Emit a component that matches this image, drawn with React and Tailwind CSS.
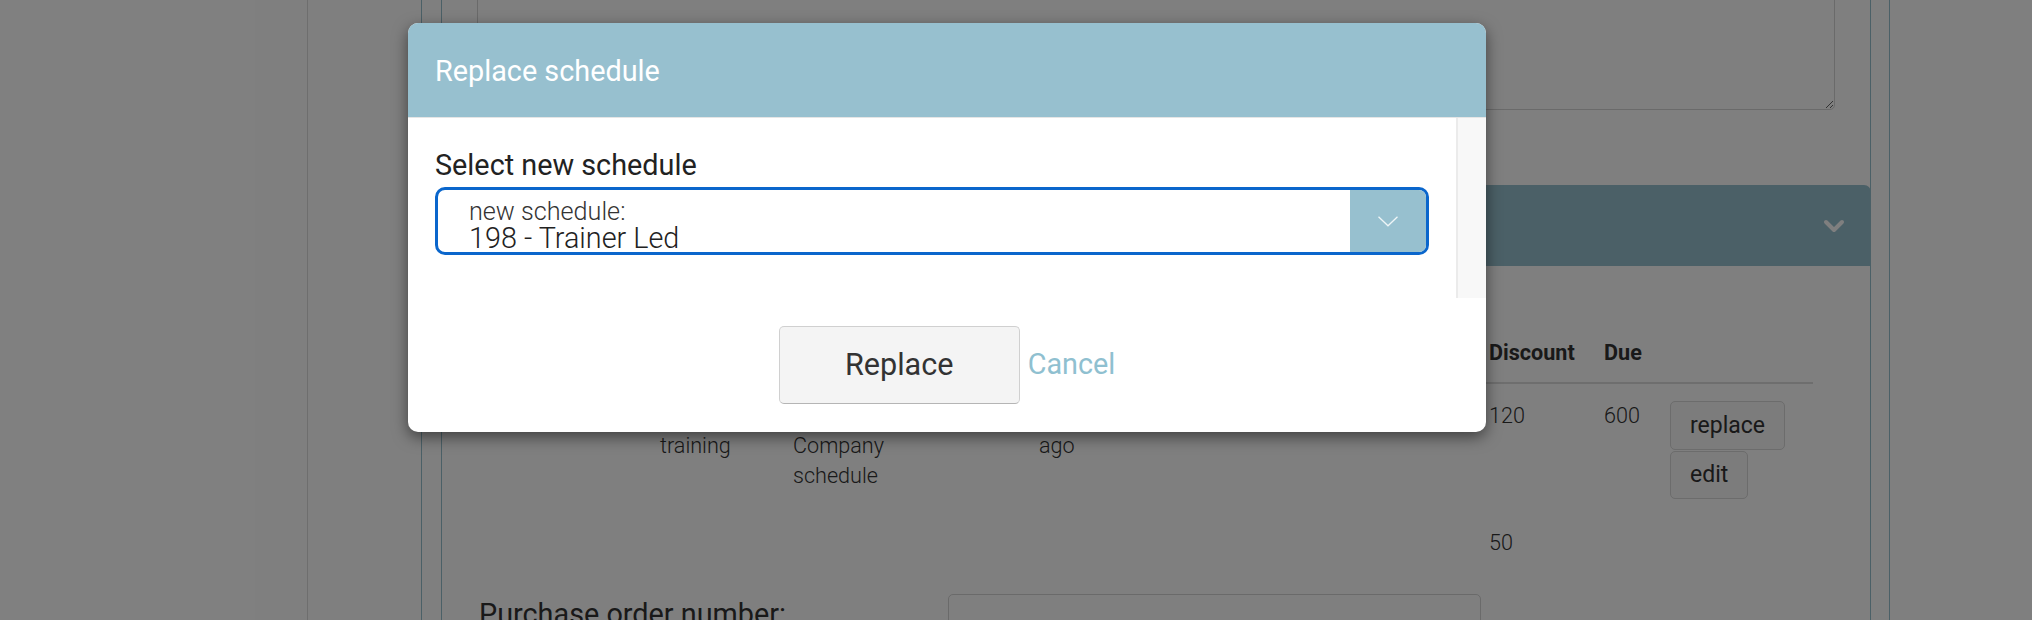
import React from "react";

function Chevron() {
  return (
    <svg width="22" height="14" viewBox="0 0 22 14" fill="none">
      <polyline points="3,3 11,11 19,3" stroke="#ffffff" strokeWidth="4" strokeLinecap="round" strokeLinejoin="round" />
    </svg>
  );
}

function SelectChevron() {
  return (
    <svg width="20" height="11" viewBox="0 0 20 11" fill="none">
      <polyline points="0.5,0.8 10,9.8 19.5,0.8" stroke="#eef5f7" strokeWidth="1.3" />
    </svg>
  );
}

export default function App() {
  const th = "text-left font-bold pt-[8px] pb-[14px] border-b-2 border-[#dddddd]";
  const td = "align-top pt-[17px] pb-[12px]";
  return (
    <div className="relative w-[2032px] h-[620px] overflow-hidden bg-white font-['Roboto',sans-serif]">
      {/* background page */}
      <div className="flex h-[620px]">
        <div className="w-[308px] shrink-0 border-r border-[#dcdcdc]" />
        <div className="pl-[113px]">
          <div className="flex h-[620px] w-[1469px] flex-col border-x border-[#97c0cf] pl-[19px] pr-[18px]">
            <div className="-mt-[40px] h-[700px] shrink-0 border-x border-[#97c0cf]">
              <div className="px-[35px]">
                <textarea
                  readOnly
                  className="block h-[150px] w-full rounded-[5px] border border-[#d4d4d4] bg-white"
                />
              </div>
              <div className="-mx-px mt-[75px] flex h-[81px] items-center justify-end rounded-tr-[7px] bg-[#97c0cf] pr-[26px]">
                <Chevron />
              </div>
              <div className="pl-[37px] pt-[64px]">
                <table className="w-[1334px] table-fixed border-collapse text-[21.6px] leading-[30px] text-[#333]">
                  <thead>
                    <tr>
                      <th className={`w-[181px] ${th}`}></th>
                      <th className={`w-[133px] ${th}`}></th>
                      <th className={`w-[246px] ${th}`}></th>
                      <th className={`w-[450px] ${th}`}></th>
                      <th className={`w-[115px] ${th}`}>Discount</th>
                      <th className={`w-[66px] ${th}`}>Due</th>
                      <th className={th}></th>
                    </tr>
                  </thead>
                  <tbody className="font-light">
                    <tr>
                      <td className={td}></td>
                      <td className={td}>
                        <div className="h-[30px]"></div>
                        training
                      </td>
                      <td className={td}>
                        <div className="h-[30px]"></div>
                        <div className="w-[130px]">Company schedule</div>
                      </td>
                      <td className={td}>
                        <div className="h-[30px]"></div>
                        ago
                      </td>
                      <td className={td}>120</td>
                      <td className={td}>600</td>
                      <td className={td}>
                        <div className="flex flex-col items-start gap-px font-normal">
                          <button className="h-[49px] rounded-[5px] border border-[#d8d8d8] bg-[#f8f8f8] px-[19px] text-[23px] leading-[30px] text-[#333]">
                            replace
                          </button>
                          <button className="h-[48px] rounded-[5px] border border-[#d8d8d8] bg-[#f8f8f8] px-[19px] text-[23px] leading-[30px] text-[#333]">
                            edit
                          </button>
                        </div>
                      </td>
                    </tr>
                    <tr>
                      <td className={td}></td>
                      <td className={td}></td>
                      <td className={td}></td>
                      <td className={td}></td>
                      <td className={td}>50</td>
                      <td className={td}></td>
                      <td className={td}></td>
                    </tr>
                  </tbody>
                </table>
                <div className="mt-[24px] flex items-start">
                  <div className="w-[469px] text-[28.8px] leading-[40px] text-[#333]">Purchase order number:</div>
                  <div className="h-[60px] w-[533px] rounded-[5px] border border-[#d4d4d4] pl-[42px] pt-[22px] text-[21.6px] leading-[30px] text-[#555]">
                    ABB-1042
                  </div>
                </div>
              </div>
            </div>
          </div>
        </div>
      </div>

      {/* backdrop */}
      <div className="absolute inset-0 bg-black/50" />

      {/* modal */}
      <div className="absolute left-[408px] top-[23px] w-[1078px] overflow-hidden rounded-[10px] bg-white shadow-[0_5px_15px_rgba(0,0,0,0.5)]">
        <div className="border-b border-[#e5e5e5] bg-[#97c0cf] pb-[26px] pl-[27px] pt-[28px] text-[28.8px] leading-[40px] text-white">
          Replace schedule
        </div>
        <div className="flex h-[180px]">
          <div className="flex-1 px-[27px] pt-[27px]">
            <div className="text-[28.8px] leading-[40px] text-[#222]">Select new schedule</div>
            <div className="mt-[2px] flex h-[68px] overflow-hidden rounded-[10px] border-[3px] border-[#0a66cc]">
              <div className="flex-1 pl-[31px] pt-[10px]">
                <div className="text-[25.2px] leading-[24px] font-light text-[#333]">new schedule:</div>
                <div className="text-[28.8px] leading-[28px] font-light text-[#222]">198 - Trainer Led</div>
              </div>
              <div className="flex w-[76px] items-center justify-center bg-[#97c0cf]">
                <SelectChevron />
              </div>
            </div>
          </div>
          <div className="w-[30px] border-l-2 border-[#ebebeb] bg-[#f8f8f8]" />
        </div>
        <div className="flex items-center justify-center gap-[8px] pb-[28px] pt-[28px]">
          <button className="h-[78px] w-[241px] rounded-[5px] border border-[#d0d0d0] border-b-[#b5b5b5] bg-[#f4f4f4] text-[30.6px] leading-[40px] text-[#333]">
            Replace
          </button>
          <span className="pb-[2px] text-[28.8px] leading-[40px] text-[#8fc0d0]">Cancel</span>
        </div>
      </div>
    </div>
  );
}
